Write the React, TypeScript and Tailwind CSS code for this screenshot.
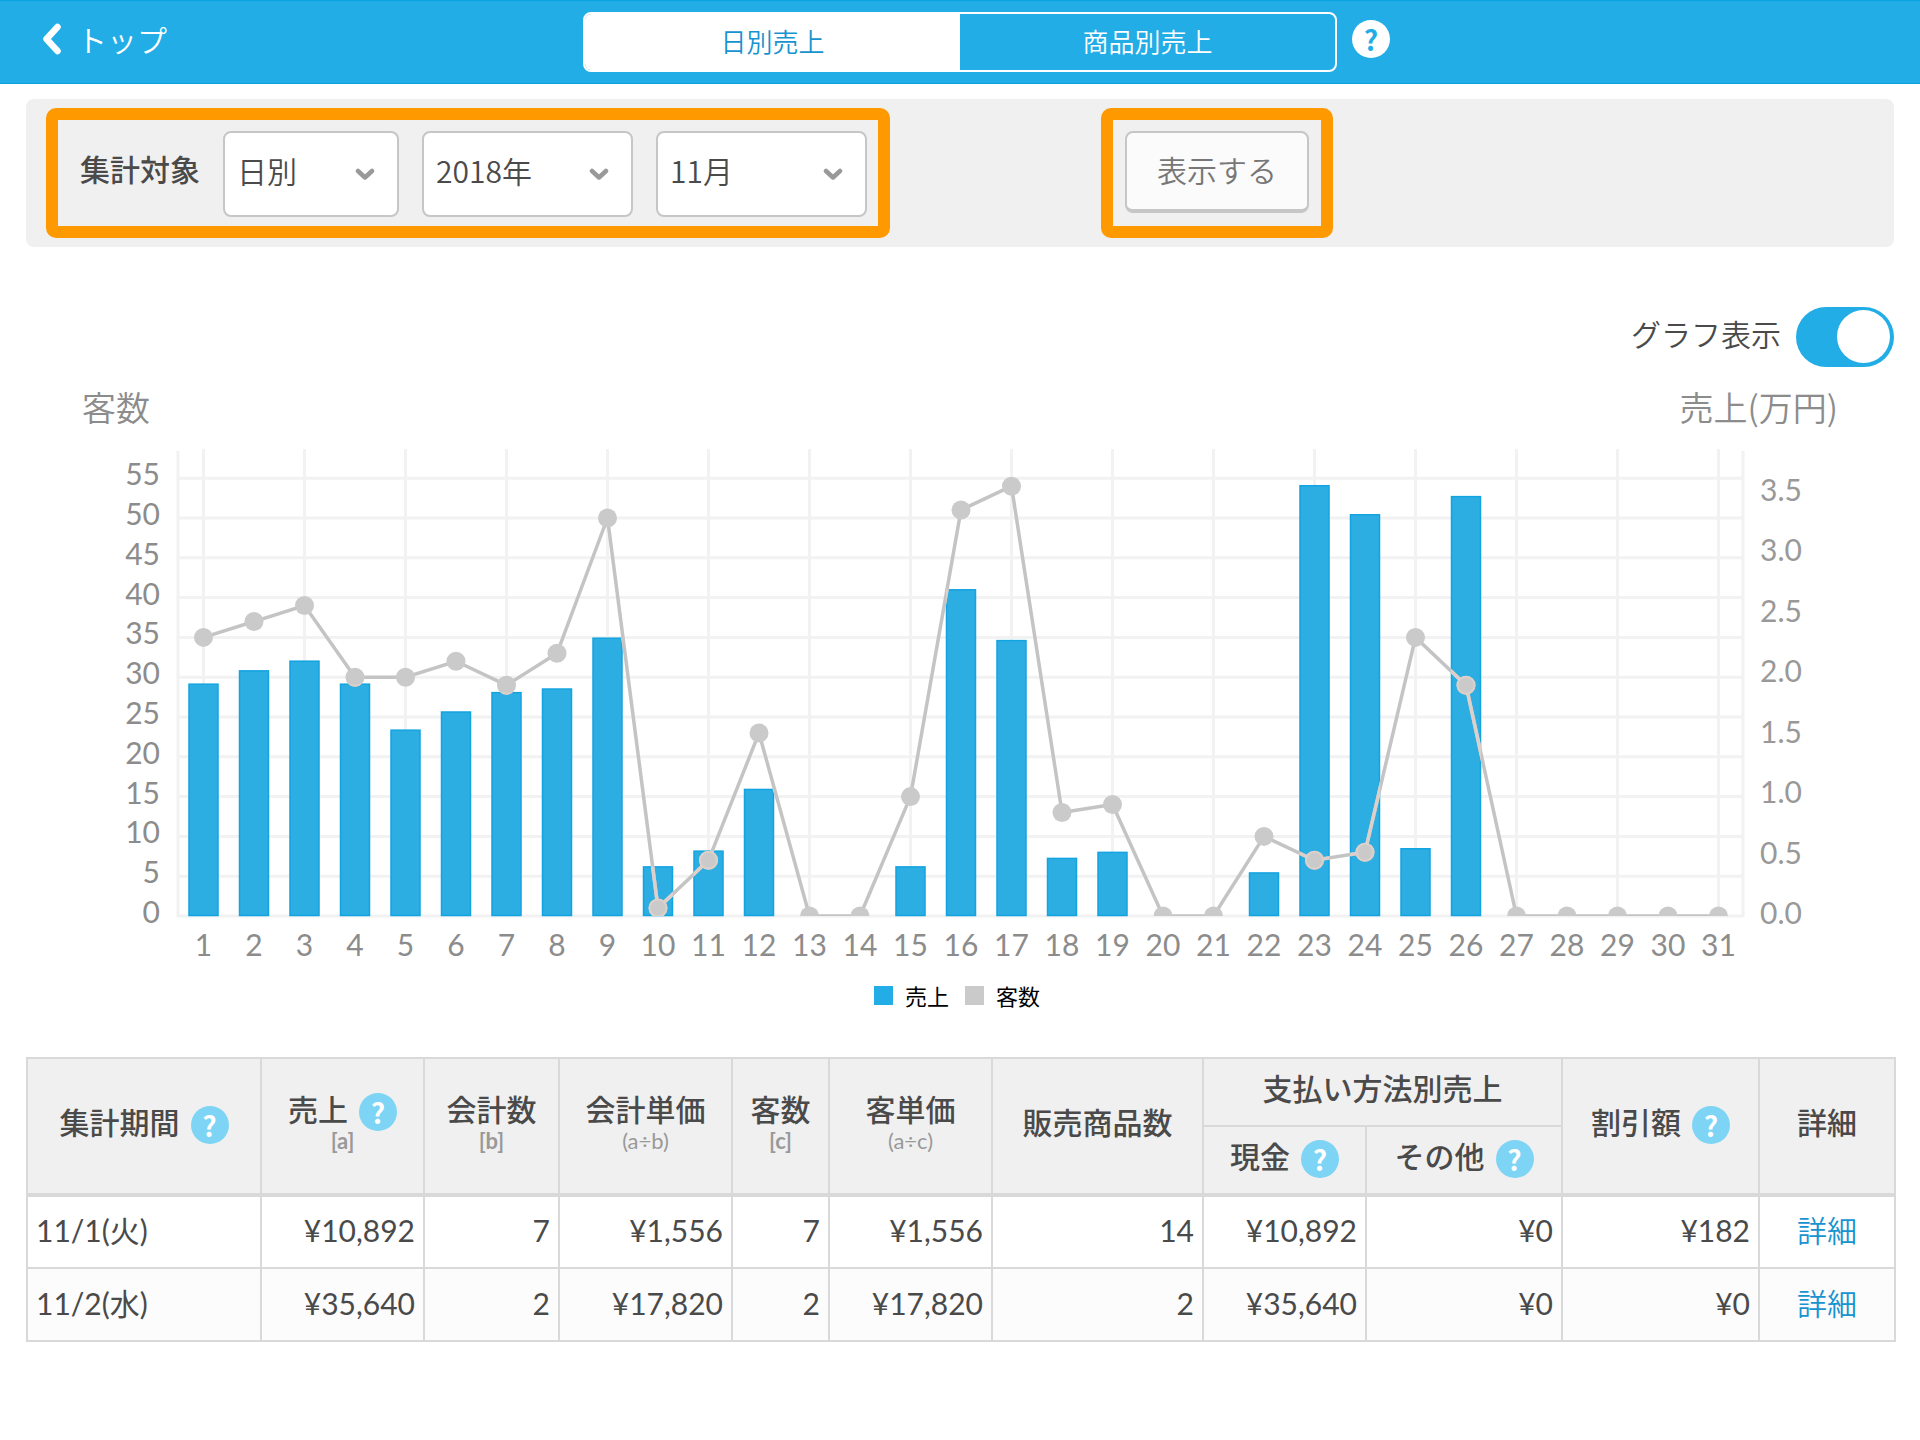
import React, { useState } from 'react';

type Day = { sales: number; guests: number };

// sales in 万円, one entry per day of the month
const days: Day[] = [
  { sales: 1.92, guests: 35 },
  { sales: 2.03, guests: 37 },
  { sales: 2.11, guests: 39 },
  { sales: 1.92, guests: 30 },
  { sales: 1.54, guests: 30 },
  { sales: 1.69, guests: 32 },
  { sales: 1.85, guests: 29 },
  { sales: 1.88, guests: 33 },
  { sales: 2.3, guests: 50 },
  { sales: 0.41, guests: 1 },
  { sales: 0.54, guests: 7 },
  { sales: 1.05, guests: 23 },
  { sales: 0, guests: 0 },
  { sales: 0, guests: 0 },
  { sales: 0.41, guests: 15 },
  { sales: 2.7, guests: 51 },
  { sales: 2.28, guests: 54 },
  { sales: 0.48, guests: 13 },
  { sales: 0.53, guests: 14 },
  { sales: 0, guests: 0 },
  { sales: 0, guests: 0 },
  { sales: 0.36, guests: 10 },
  { sales: 3.56, guests: 7 },
  { sales: 3.32, guests: 8 },
  { sales: 0.56, guests: 35 },
  { sales: 3.47, guests: 29 },
  { sales: 0, guests: 0 },
  { sales: 0, guests: 0 },
  { sales: 0, guests: 0 },
  { sales: 0, guests: 0 },
  { sales: 0, guests: 0 },
];

const rows = [
  {
    date: '11/1(火)',
    values: ['¥10,892', '7', '¥1,556', '7', '¥1,556', '14', '¥10,892', '¥0', '¥182'],
  },
  {
    date: '11/2(水)',
    values: ['¥35,640', '2', '¥17,820', '2', '¥17,820', '2', '¥35,640', '¥0', '¥0'],
  },
];

const LEFT = 152;
const RIGHT = 1717;
const TOP = 22;
const BASE = 489;

const dayX = (i: number) => 177.5 + i * 50.5;
const guestY = (v: number) => BASE - v * 7.96;
const salesY = (v: number) => BASE - v * 121;

const Chart: React.FC = () => {
  const guestTicks = Array.from({ length: 12 }, (_, i) => i * 5);
  const salesTicks = Array.from({ length: 8 }, (_, i) => i * 0.5);
  const points = days.map((d, i) => `${dayX(i)},${guestY(d.guests)}`).join(' ');

  return (
    <svg
      viewBox="0 0 1868 540"
      className="block w-full font-['Lato','Noto_Sans_CJK_JP',sans-serif]"
      role="img"
      aria-label="日別売上グラフ"
    >
      <defs>
        <clipPath id="plot">
          <rect x={LEFT} y={0} width={RIGHT - LEFT} height={BASE} />
        </clipPath>
        <clipPath id="bars">
          {days.map((d, i) => (
            <rect key={i} x={dayX(i) - 15} y={salesY(d.sales)} width={30} height={BASE - salesY(d.sales)} />
          ))}
        </clipPath>
      </defs>

      {/* grid */}
      <g stroke="#f2f2f2" strokeWidth={3}>
        {guestTicks.map((v) => (
          <line key={v} x1={LEFT} x2={RIGHT} y1={guestY(v)} y2={guestY(v)} />
        ))}
        {days.map((_, i) =>
          i % 2 === 0 ? <line key={i} x1={dayX(i)} x2={dayX(i)} y1={TOP} y2={BASE} /> : null
        )}
        <line x1={LEFT} x2={LEFT} y1={TOP + 2} y2={BASE + 1} />
        <line x1={RIGHT} x2={RIGHT} y1={TOP + 2} y2={BASE + 1} />
      </g>

      {/* bars */}
      {days.map((d, i) =>
        d.sales > 0 ? (
          <rect
            key={i}
            x={dayX(i) - 14.5}
            y={salesY(d.sales) + 0.5}
            width={29}
            height={BASE - salesY(d.sales) - 1}
            fill="#2daee3"
            stroke="#13a3e0"
            strokeWidth={1.5}
          />
        ) : null
      )}

      {/* guests */}
      <g clipPath="url(#plot)">
        <polyline points={points} fill="none" stroke="#c4c4c4" strokeWidth={3.5} />
        {days.map((d, i) => (
          <circle key={i} cx={dayX(i)} cy={guestY(d.guests)} r={9.5} fill="#cacaca" />
        ))}
      </g>
      <g clipPath="url(#bars)">
        <polyline points={points} fill="none" stroke="#ddd0ca" strokeWidth={3.5} />
        {days.map((d, i) => (
          <circle
            key={i}
            cx={dayX(i)}
            cy={guestY(d.guests)}
            r={8.5}
            fill="#cacaca"
            stroke="#ddd0ca"
            strokeWidth={2}
          />
        ))}
      </g>

      {/* axis labels */}
      <g fontSize={30} fill="#8c8c8c">
        {guestTicks.map((v) => (
          <text key={v} x={134} y={guestY(v) + 7} textAnchor="end">
            {v}
          </text>
        ))}
        {days.map((_, i) => (
          <text key={i} x={dayX(i)} y={529} textAnchor="middle">
            {i + 1}
          </text>
        ))}
      </g>
      <g fontSize={30} fill="#999999">
        {salesTicks.map((v) => (
          <text key={v} x={1734} y={salesY(v) + 8}>
            {v.toFixed(1)}
          </text>
        ))}
      </g>
    </svg>
  );
};

const Chevron = () => (
  <svg
    viewBox="0 0 20 14"
    className="pointer-events-none absolute right-6 top-1/2 h-3.5 w-5 -translate-y-1/2"
    fill="none"
    stroke="#999999"
    strokeWidth={4.5}
    strokeLinecap="round"
    strokeLinejoin="round"
  >
    <path d="M3 4 L10 10.5 L17 4" />
  </svg>
);

const Select: React.FC<{ label: string; width: string; options: string[] }> = ({
  label,
  width,
  options,
}) => (
  <div className={`relative ${width}`}>
    <select
      aria-label={label}
      className="h-[86px] w-full appearance-none rounded-lg border-2 border-[#c6c6c6] bg-white pb-2 pl-3 text-3xl font-[350] text-[#4a4a4a]"
    >
      {options.map((o) => (
        <option key={o}>{o}</option>
      ))}
    </select>
    <Chevron />
  </div>
);

const Help: React.FC<{ tone?: 'table' | 'header' }> = ({ tone = 'table' }) => (
  <button
    type="button"
    className={`inline-flex size-[38px] shrink-0 items-center justify-center rounded-full font-['Noto_Sans_CJK_JP',sans-serif] text-[28px] leading-none font-bold ${
      tone === 'table' ? 'bg-[#7dd4f4] text-white' : 'bg-white text-[#22ade6]'
    }`}
  >
    ?
  </button>
);

const Heading: React.FC<{ title: string; sub?: string; help?: boolean }> = ({ title, sub, help }) => (
  <div className={`flex flex-col items-center ${sub ? 'pb-2' : 'pb-0.5'}`}>
    <div className="flex h-[38px] items-center justify-center gap-[11px] leading-[38px] whitespace-nowrap">
      <span className="pb-2">{title}</span>
      {help && <Help />}
    </div>
    {sub && (
      <span
        className={`font-['Lato',sans-serif] text-[22px] leading-5 text-[#999999] ${sub.startsWith('[') ? 'font-bold' : 'font-normal'}`}
      >
        {sub}
      </span>
    )}
  </div>
);

export default function App() {
  const [showChart, setShowChart] = useState(true);
  const [tab, setTab] = useState(0);

  return (
    <div className="min-h-screen bg-white font-['Noto_Sans_CJK_JP',sans-serif] text-[#4a4a4a]" lang="ja">
      <header className="grid h-[84px] grid-cols-[1fr_2fr_1fr] items-center border-y border-[#0ba2e2] bg-[#22ade6] text-white lg:grid-cols-[1fr_754px_1fr]">
        <a href="#top" className="flex items-center gap-[15px] pb-1.5 pl-[42px] text-3xl font-[350]">
          <svg
            viewBox="0 0 20 32"
            className="h-8 w-5"
            fill="none"
            stroke="currentColor"
            strokeWidth={6.5}
            strokeLinecap="round"
            strokeLinejoin="round"
          >
            <path d="M15.5 4 L4.5 16 L15.5 28" />
          </svg>
          トップ
        </a>
        <div className="grid h-[60px] grid-cols-2 overflow-hidden rounded-lg border-2 border-white text-[26px] font-[350]">
          {['日別売上', '商品別売上'].map((name, i) => (
            <button
              key={name}
              type="button"
              onClick={() => setTab(i)}
              className={`pb-1 ${tab === i ? 'bg-white text-[#1793cf]' : 'text-white'}`}
            >
              {name}
            </button>
          ))}
        </div>
        <div className="flex pb-1.5 pl-[15px]">
          <Help tone="header" />
        </div>
      </header>

      <main className="px-[26px] pt-[15px]">
        <form
          className="flex items-stretch rounded-lg bg-[#f0f0f0] px-5 py-[9px]"
          onSubmit={(e) => e.preventDefault()}
        >
          <div className="flex items-center gap-[23px] rounded-[10px] border-12 border-[#ff9900] pt-[11px] pr-[11px] pb-[9px] pl-[22px]">
            <span className="pb-3 text-3xl font-medium whitespace-nowrap">集計対象</span>
            <Select label="集計単位" width="w-[176px]" options={['日別', '月別']} />
            <Select label="年" width="w-[211px]" options={['2018年', '2017年']} />
            <Select label="月" width="w-[211px]" options={['11月', '12月']} />
          </div>
          <div className="ml-[211px] rounded-[10px] border-12 border-[#ff9900] px-3 pt-[11px]">
            <button
              type="submit"
              className="h-[82px] w-[184px] rounded-lg border-2 border-b-4 border-[#c6c6c6] bg-[#fbfbfb] pb-1 text-3xl font-[350] text-[#777777]"
            >
              表示する
            </button>
          </div>
        </form>

        <div className="mt-[60px] flex justify-end">
          <label className="flex items-center gap-[15px] text-3xl font-[350]">
            <span className="pb-2">グラフ表示</span>
            <span className="relative h-[60px] w-[98px]">
              <input
                type="checkbox"
                checked={showChart}
                onChange={(e) => setShowChart(e.target.checked)}
                className="peer size-full appearance-none rounded-full bg-gray-300 checked:bg-[#22ade6]"
              />
              <span className="pointer-events-none absolute top-[3px] left-1 size-[53px] rounded-full bg-white transition-transform peer-checked:translate-x-[37px]" />
            </span>
          </label>
        </div>

        {showChart && (
          <section>
            <div className="mt-5 flex justify-between px-14 text-[34px] leading-10 font-[350] text-[#8c8c8c]">
              <span>客数</span>
              <span>売上(万円)</span>
            </div>
            <Chart />
            <div className="mt-[13px] flex items-center justify-center gap-4 pr-1.5 text-[22px] leading-[30px] text-black">
              <span className="flex items-center gap-3">
                <i className="size-[19px] bg-[#22ade6]" />
                売上
              </span>
              <span className="flex items-center gap-3">
                <i className="size-[19px] bg-[#cacaca]" />
                客数
              </span>
            </div>
          </section>
        )}

        <table className="mt-[47px] w-full table-fixed border-collapse text-3xl [&_td]:border-2 [&_td]:border-[#d9d9d9] [&_th]:border-2 [&_th]:border-[#d9d9d9] [&_th]:p-0 [&_th]:font-medium">
          <colgroup>
            <col className="w-[234px]" />
            <col className="w-[163px]" />
            <col className="w-[135px]" />
            <col className="w-[173px]" />
            <col className="w-[97px]" />
            <col className="w-[163px]" />
            <col className="w-[211px]" />
            <col className="w-[163px]" />
            <col className="w-[196px]" />
            <col className="w-[197px]" />
            <col className="w-[136px]" />
          </colgroup>
          <thead className="border-b-4 border-[#d9d9d9] bg-[#f0f0f0]">
            <tr className="h-[68px]">
              <th rowSpan={2}>
                <Heading title="集計期間" help />
              </th>
              <th rowSpan={2}>
                <Heading title="売上" sub="[a]" help />
              </th>
              <th rowSpan={2}>
                <Heading title="会計数" sub="[b]" />
              </th>
              <th rowSpan={2}>
                <Heading title="会計単価" sub="(a÷b)" />
              </th>
              <th rowSpan={2}>
                <Heading title="客数" sub="[c]" />
              </th>
              <th rowSpan={2}>
                <Heading title="客単価" sub="(a÷c)" />
              </th>
              <th rowSpan={2}>
                <Heading title="販売商品数" />
              </th>
              <th colSpan={2}>
                <Heading title="支払い方法別売上" />
              </th>
              <th rowSpan={2}>
                <Heading title="割引額" help />
              </th>
              <th rowSpan={2}>
                <Heading title="詳細" />
              </th>
            </tr>
            <tr className="h-[69px]">
              <th>
                <Heading title="現金" help />
              </th>
              <th>
                <Heading title="その他" help />
              </th>
            </tr>
          </thead>
          <tbody className="font-['Lato','Noto_Sans_CJK_JP',sans-serif]">
            {rows.map((row) => (
              <tr key={row.date} className="h-[73px] even:bg-[#fcfcfc]">
                <td className="pb-1 pl-2">{row.date}</td>
                {row.values.map((v, i) => (
                  <td key={i} className="pr-2 pb-1 text-right">
                    {v}
                  </td>
                ))}
                <td className="pb-1 text-center font-[350]">
                  <a href={`#${row.date}`} className="text-[#1793cf]">
                    詳細
                  </a>
                </td>
              </tr>
            ))}
          </tbody>
        </table>
      </main>
    </div>
  );
}
